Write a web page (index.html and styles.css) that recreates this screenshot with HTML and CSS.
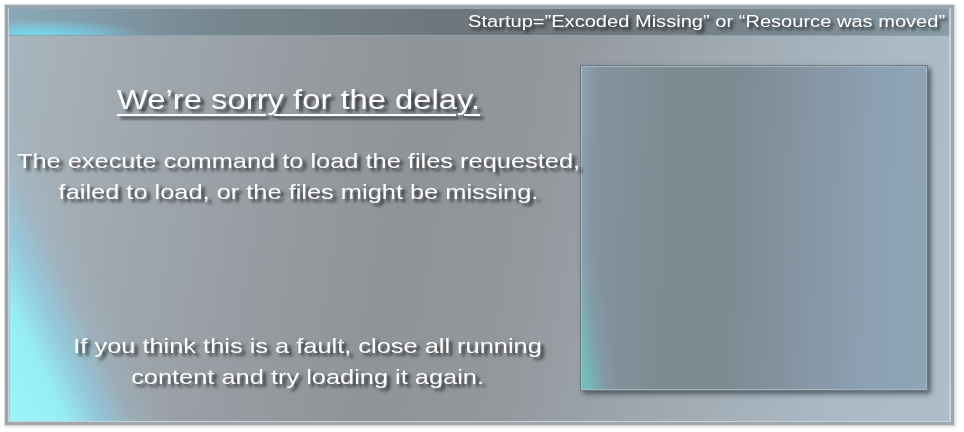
FILE: index.html
```html
<!DOCTYPE html>
<html>
<head>
<meta charset="utf-8">
<link rel="stylesheet" href="styles.css">
</head>
<body>
<div class="frame">
  <div class="titlebar">
    <span class="title-text">Startup=”Excoded Missing” or “Resource was moved”</span>
  </div>
  <div class="main">
    <div class="message">
      <h1 class="heading"><span class="heading-text">We’re sorry for the delay.</span></h1>
      <p class="para">The execute command to load the files requested,<br>failed to load, or the files might be missing.</p>
      <p class="para para-bottom">If you think this is a fault, close all running<br>content and try loading it again.</p>
    </div>
    <div class="preview-wrap">
      <div class="preview"></div>
    </div>
  </div>
</div>
</body>
</html>
```

FILE: styles.css
```css
html, body {
  margin: 0;
  padding: 0;
  background: #ffffff;
  width: 964px;
  height: 432px;
  overflow: hidden;
}

.frame {
  margin: 4px 0 0 4px;
  width: 951px;
  height: 422px;
  box-sizing: border-box;
  border: 1px solid #d5dbde;
  box-shadow: inset 0 0 0 3px #9ea7ad, 1px 1px 2px rgba(0,0,0,0.15);
  padding: 3px 5px 4px 4px;
  display: flex;
  flex-direction: column;
  background: #c9d1d5;
  font-family: "Liberation Sans", Arial, sans-serif;
  color: #ffffff;
}

.titlebar {
  height: 28px;
  flex: none;
  box-sizing: border-box;
  border-bottom: 1px solid #8aa3b0;
  border-top: 1px solid #9aa6ac;
  background:
    radial-gradient(ellipse 110px 16px at 25px 100%, rgba(120,215,235,1) 0%, rgba(120,210,232,0.7) 45%, rgba(125,210,230,0) 100%),
    linear-gradient(90deg, #8aa8b8 0%, #829dab 8%, #77878f 22%, #6f777d 45%, #6f787e 65%, #7c8a93 85%, #8a9ca7 100%);
  display: flex;
  align-items: center;
  justify-content: flex-end;
  padding-right: 4px;
}

.title-text {
  display: inline-block;
  font-size: 16px;
  transform: scaleX(1.255);
  transform-origin: right center;
  text-shadow: 2px 3px 3px rgba(0,0,0,0.75);
  white-space: nowrap;
}

.main {
  flex: 1;
  display: flex;
  background:
    linear-gradient(64deg, rgba(155,245,248,1) 0%, rgba(150,240,248,0.95) 5%, rgba(140,215,240,0.65) 8%, rgba(150,200,225,0.2) 11%, rgba(150,200,225,0) 14%),
    linear-gradient(100deg, #a8b5be 0%, #a1aab1 12%, #979ca2 28%, #8f9499 42%, #93989d 55%, #a0aab2 72%, #aab9c5 88%, #aebdc9 100%);
  border-left: 1px solid #b7c3ca;
}

.message {
  width: 567px;
  flex: none;
  text-align: center;
  padding-top: 47px;
  padding-left: 10px;
  box-sizing: border-box;
  white-space: nowrap;
}

.heading {
  margin: 0;
  font-weight: normal;
  font-size: 27px;
  line-height: 34px;
}

.heading-text {
  display: inline-block;
  transform: scaleX(1.214);
  text-decoration: underline;
  text-decoration-thickness: 2px;
  text-underline-offset: 5px;
  text-shadow: 3px 3px 3px rgba(0,0,0,0.7);
}

.para {
  margin: 28px 0 0 0;
  font-size: 21px;
  line-height: 31px;
  transform: scaleX(1.209);
  text-shadow: 3px 3px 3px rgba(0,0,0,0.7);
}

.para-bottom {
  margin-top: 123px;
  padding-left: 15px;
}

.preview-wrap {
  flex: 1;
  padding: 29px 21px 30px 3px;
  display: flex;
}

.preview {
  flex: 1;
  border: 1px solid #6f7b83;
  box-shadow: inset 0 0 0 1px #a5b4bd, 3px 3px 5px rgba(40,50,58,0.65);
  background:
    linear-gradient(80deg, rgba(110,200,195,0.95) 0%, rgba(110,200,195,0.6) 3%, rgba(130,175,200,0.3) 6%, rgba(110,200,195,0) 10%),
    linear-gradient(92deg, #8ea3b2 0%, #84939d 5%, #7f8b93 25%, #7e8a92 42%, #8493a0 60%, #8b9fb0 80%, #8fa6b7 100%);
}
```
